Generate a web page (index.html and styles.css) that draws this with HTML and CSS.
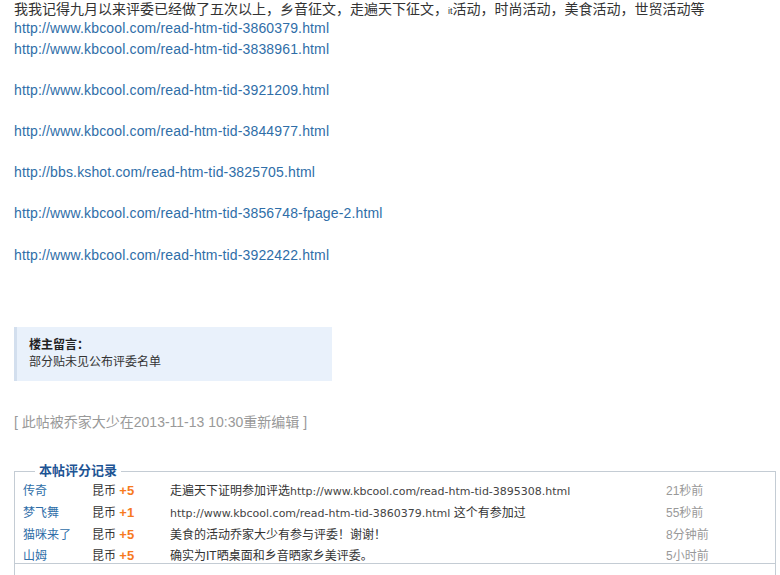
FILE: index.html
```html
<!DOCTYPE html>
<html>
<head>
  <title>帖子内容</title>
  <link rel="stylesheet" href="styles.css">
</head>
<body>
  <div class="post">
    <div class="lead">我我记得九月以来评委已经做了五次以上，乡音征文，走遍天下征文，<span class="tiny">it</span>活动，时尚活动，美食活动，世贸活动等</div>
    <div class="post-body">
      <a href="#">http://www.kbcool.com/read-htm-tid-3860379.html</a><br>
      <a href="#">http://www.kbcool.com/read-htm-tid-3838961.html</a><br>
      <br>
      <a href="#">http://www.kbcool.com/read-htm-tid-3921209.html</a><br>
      <br>
      <a href="#">http://www.kbcool.com/read-htm-tid-3844977.html</a><br>
      <br>
      <a href="#">http://bbs.kshot.com/read-htm-tid-3825705.html</a><br>
      <br>
      <a href="#">http://www.kbcool.com/read-htm-tid-3856748-fpage-2.html</a><br>
      <br>
      <a href="#">http://www.kbcool.com/read-htm-tid-3922422.html</a>
    </div>

    <div class="owner-note">
      <strong>楼主留言：</strong><br>
      部分贴未见公布评委名单
    </div>

    <div class="edit-info">[ 此帖被乔家大少在2013-11-13 10:30重新编辑 ]</div>

    <fieldset class="rate-log">
      <legend>本帖评分记录</legend>
      <table>
        <tr>
          <td class="who"><a href="#">传奇</a></td>
          <td class="coin">昆币 <span class="score">+5</span></td>
          <td class="reason">走遍天下证明参加评选<span class="url">http://www.kbcool.com/read-htm-tid-3895308.html</span></td>
          <td class="when">21秒前</td>
        </tr>
        <tr>
          <td class="who"><a href="#">梦飞舞</a></td>
          <td class="coin">昆币 <span class="score">+1</span></td>
          <td class="reason"><span class="url">http://www.kbcool.com/read-htm-tid-3860379.html</span> 这个有参加过</td>
          <td class="when">55秒前</td>
        </tr>
        <tr>
          <td class="who"><a href="#">猫咪来了</a></td>
          <td class="coin">昆币 <span class="score">+5</span></td>
          <td class="reason">美食的活动乔家大少有参与评委！谢谢！</td>
          <td class="when">8分钟前</td>
        </tr>
        <tr>
          <td class="who"><a href="#">山姆</a></td>
          <td class="coin">昆币 <span class="score">+5</span></td>
          <td class="reason">确实为IT晒桌面和乡音晒家乡美评委。</td>
          <td class="when">5小时前</td>
        </tr>
      </table>
      <div class="rate-foot"></div>
    </fieldset>
  </div>
</body>
</html>
```

FILE: styles.css
```css
body {
  margin: 0;
  background: #fff;
  color: #333;
  font-family: "Liberation Sans", "Noto Sans CJK SC", sans-serif;
  font-size: 14px;
}

.post {
  padding: 0 4px 0 14px;
}

.lead {
  height: 18px;
  line-height: 18px;
  white-space: nowrap;
}

.post-body {
  line-height: 20.6px;
}

.post-body a {
  color: #2f6ea8;
  text-decoration: none;
  letter-spacing: 0.15px;
}

.tiny {
  font-size: 9px;
}

.owner-note {
  margin-top: 62px;
  width: 303px;
  padding: 10px 0 10px 12px;
  background: #e9f1fb;
  border-left: 3px solid #d3dfee;
  font-size: 12px;
  line-height: 17px;
  color: #333;
}

.owner-note strong {
  color: #222;
}

.edit-info {
  margin-top: 30px;
  color: #999;
  font-size: 14px;
  line-height: 22px;
}

.rate-log {
  margin: 30px 0 0 0;
  padding: 0 8px 24px 8px;
  border: 1px solid #c4ccd4;
}

.rate-log legend {
  margin-left: 12px;
  padding: 0 4px;
  color: #1e5494;
  font-weight: bold;
  font-size: 13px;
  line-height: 16px;
}

.rate-log table {
  width: 100%;
  border-collapse: collapse;
  font-size: 12px;
}

.rate-log td {
  height: 21.6px;
  padding: 0;
  white-space: nowrap;
}

.who {
  width: 69px;
}

.who a {
  color: #2f6ea8;
  text-decoration: none;
}

.coin {
  width: 78px;
  color: #333;
}

.score {
  color: #f77a1e;
  font-weight: bold;
  font-size: 13px;
}

.reason {
  color: #333;
}

.url {
  color: #444;
  font-family: "DejaVu Sans", sans-serif;
  font-size: 11px;
}

.when {
  width: 101px;
  color: #999;
}

.rate-foot {
  border-top: 1px solid #c4ccd4;
  margin: -3px -8px 0;
}
```
